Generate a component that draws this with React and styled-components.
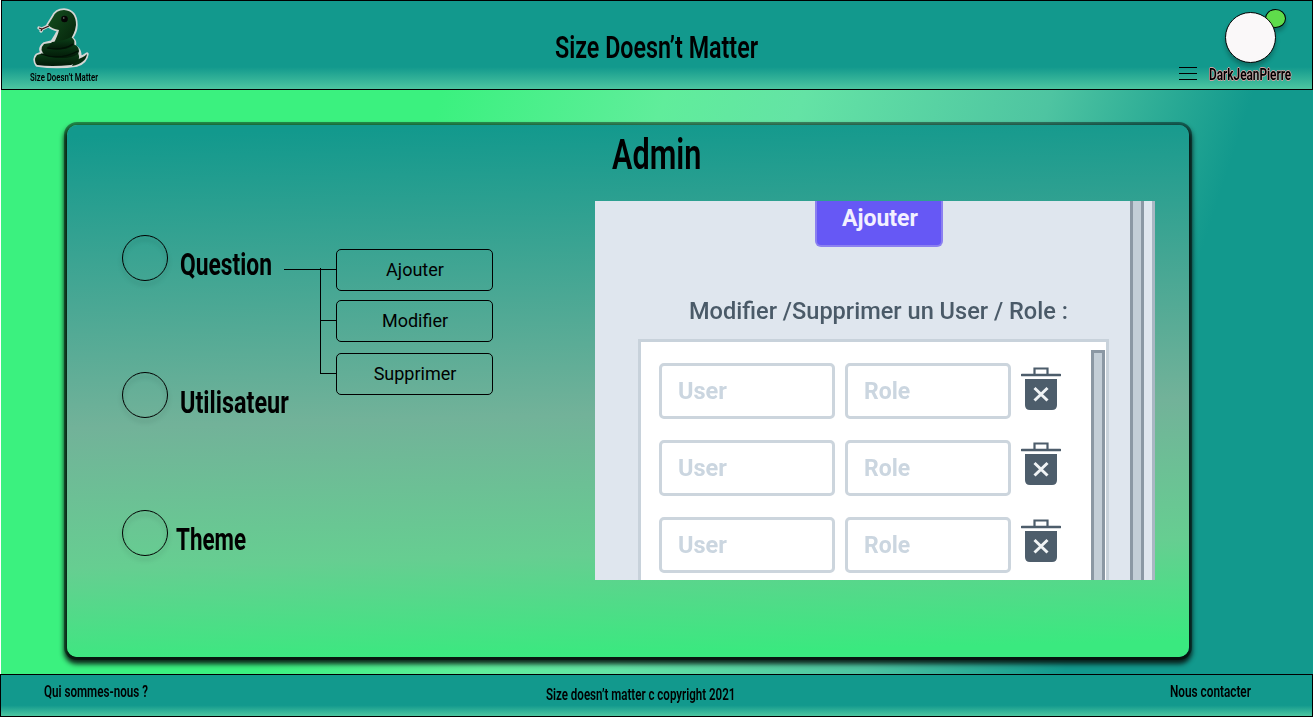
import React, { useLayoutEffect, useRef, useState } from "react";
import styled, { createGlobalStyle } from "styled-components";

const GlobalStyle = createGlobalStyle`
  *, *::before, *::after { box-sizing: border-box; }
  body { margin: 0; overflow: hidden; background: #fff; }
`;

const Page = styled.div`
  width: 1313px;
  height: 717px;
  display: flex;
  flex-direction: column;
  color: #000;
  font-family: Roboto, "Liberation Sans", sans-serif;
  background: linear-gradient(108deg, #3bf17f 30.5%, #60ed9b 45%, #64e3a5 54%, #4ec4a1 70%, #12998d 83%);
  border-left: 1px solid #fff;
`;

const FitBox = styled.span`
  display: block;
  width: ${(p) => p.$width}px;
  font-size: ${(p) => p.$size}px;
  line-height: 1.2;
  font-weight: ${(p) => p.$weight || 500};
  white-space: nowrap;
`;

const FitInner = styled.span`
  display: inline-block;
  transform-origin: 0 50%;
`;

/* Condensed lettering: the text is squeezed horizontally to a given width. */
function Condensed({ width, size, weight, children, className }) {
  const ref = useRef(null);
  const [scale, setScale] = useState(1);
  useLayoutEffect(() => {
    setScale(width / ref.current.offsetWidth);
  }, [width, children]);
  return (
    <FitBox $width={width} $size={size} $weight={weight} className={className}>
      <FitInner ref={ref} style={{ transform: `scaleX(${scale})` }}>{children}</FitInner>
    </FitBox>
  );
}

const Header = styled.header`
  height: 90px;
  flex: none;
  display: grid;
  grid-template-columns: 1fr auto 1fr;
  border: 1px solid #000;
  background: linear-gradient(#12998d 75%, #4dc6a0 100%);
`;

const Brand = styled.div`
  padding: 6px 0 0 28px;
  display: flex;
  flex-direction: column;
  svg { display: block; margin: 0 0 1px 3px; }
`;

const HeaderTitle = styled.h1`
  margin: 27px 2px 0 0;
`;

const Account = styled.div`
  display: flex;
  justify-content: flex-end;
  padding-right: 21px;
`;

const Burger = styled.div`
  width: 18px;
  height: 13px;
  margin: 66px 12px 0 0;
  border-top: 1px solid #000;
  border-bottom: 1px solid #000;
  display: flex;
  align-items: center;
  &::before { content: ""; width: 100%; height: 1px; background: #000; }
`;

const Profile = styled.div`
  display: flex;
  flex-direction: column;
  align-items: center;
  padding-top: 11px;
`;

const Avatar = styled.div`
  position: relative;
  width: 51px;
  height: 51px;
  border: 1px solid #000;
  border-radius: 50%;
  background: #faf8f9;
  box-shadow: 0 4px 4px rgba(0, 0, 0, 0.25);
`;

const Status = styled.span`
  position: absolute;
  z-index: -1;
  top: -3px;
  right: -10px;
  width: 21px;
  height: 19px;
  border: 1px solid #000;
  border-radius: 50%;
  background: #5fdc4b;
  box-shadow: 0 4px 4px rgba(0, 0, 0, 0.25);
`;

const AvatarWrap = styled.div`
  position: relative;
  z-index: 0;
`;

const UserName = styled(Condensed)`
  margin-top: 2px;
  text-shadow: 1px 0 #c9a3a3, -1px 0 #c9a3a3, 0 1px #c9a3a3, 0 -1px #c9a3a3;
`;

const Main = styled.main`
  flex: 1;
  padding: 35px 124px 17px 66px;
`;

const Panel = styled.section`
  height: 532px;
  border-radius: 10px;
  background: linear-gradient(178.5deg, #12998d 2%, #72b299 54%, #66ce91 79%, #3ae97f 97%);
  box-shadow: 0 0 0 3px rgba(0, 0, 0, 0.4), 0 4px 5px 3px rgba(8, 20, 16, 0.92);
  display: flex;
  flex-direction: column;
`;

const PanelTitle = styled.h2`
  margin: 4px 0 0 545px;
  height: 72px;
`;

const Columns = styled.div`
  display: flex;
  padding-left: 55px;
`;

const Menu = styled.nav`
  width: 473px;
  flex: none;
  padding-top: 34px;
  display: flex;
  flex-direction: column;
  gap: 91px;
`;

const MenuItem = styled.div`
  height: ${(p) => p.$height || 46}px;
  display: flex;
  gap: ${(p) => p.$gap || 12}px;
`;

const Dot = styled.span`
  flex: none;
  width: 46px;
  height: 46px;
  border: 1px solid #000;
  border-radius: 50%;
  filter: drop-shadow(0 4px 2px rgba(0, 0, 0, 0.25));
`;

const MenuLabel = styled(Condensed)`
  margin-top: ${(p) => p.$top || 10}px;
`;

const Branch = styled.div`
  display: flex;
  margin-top: 14px;
`;

const Trunk = styled.span`
  width: 36px;
  height: 21px;
  border-bottom: 1px solid #000;
`;

const Actions = styled.div`
  display: flex;
  flex-direction: column;
  height: 146px;
`;

const ActionRow = styled.div`
  display: flex;
  height: ${(p) => p.$height}px;
  &::before {
    content: "";
    width: 16px;
    height: ${(p) => (p.$last ? 21 : p.$height)}px;
    border-left: 1px solid #000;
    border-bottom: ${(p) => (p.$last ? "1px solid #000" : "none")};
    margin-top: ${(p) => (p.$first ? 19 : 0)}px;
    background: ${(p) => (p.$last ? "none" : "linear-gradient(#000, #000) 0 " + (p.$first ? 1 : 20) + "px / 100% 1px no-repeat")};
  }
`;

const Action = styled.button`
  width: 157px;
  height: 42px;
  padding: 0 0 2px 1px;
  border: 1px solid #000;
  border-radius: 5px;
  background: none;
  font: 400 18px Roboto, sans-serif;
  color: #000;
`;

const Preview = styled.div`
  width: 560px;
  height: 379px;
  flex: none;
  overflow: hidden;
  display: flex;
  background: #dfe6ee;
  color: #4a5a68;
  font-family: Roboto, sans-serif;
`;

const PreviewBody = styled.div`
  width: 535px;
  flex: none;
  display: flex;
  flex-direction: column;
`;

const AddButton = styled.div`
  width: 128px;
  height: 46px;
  margin-left: 220px;
  padding: 4px 0 0 25px;
  border: 2px solid #8b80f0;
  border-top: 0;
  border-radius: 0 0 6px 6px;
  background: #6658f5;
  color: #f2f0ff;
`;

const PreviewTitle = styled(Condensed)`
  margin: 51px 0 13px 94px;
`;

const List = styled.div`
  width: 471px;
  height: 241px;
  flex: none;
  margin-left: 43px;
  border: 3px solid #c8d2db;
  border-bottom: 0;
  background: #fff;
  display: flex;
`;

const Rows = styled.div`
  width: 450px;
  padding: 21px 0 0 18px;
  display: flex;
  flex-direction: column;
  gap: 21px;
`;

const Row = styled.div`
  display: flex;
  flex: none;
  height: 56.2px;
  svg { display: block; margin: 1px 0 0 10px; }
  &:first-child svg { margin-top: 3px; }
`;

const Field = styled.div`
  width: ${(p) => p.$width}px;
  margin-right: ${(p) => p.$after || 0}px;
  padding: 11px 0 0 16px;
  border: 3px solid #ccd5dd;
  border-radius: 5px;
  color: #cbd6e0;
`;

const Scrollbar = styled.div`
  width: 14px;
  margin-top: 8px;
  border: 3px solid #8b98a4;
  border-bottom: 0;
  background: #c3ced7;
`;

const Rail = styled.div`
  width: 14px;
  border: solid #8b98a4;
  border-width: 0 3px;
  background: #c3ced7;
`;

const RailEdge = styled.div`
  width: 11px;
  border-right: 3px solid #a9b7c3;
`;

const Footer = styled.footer`
  height: 43px;
  width: 1313px;
  margin-left: -1px;
  flex: none;
  display: grid;
  grid-template-columns: 502px 1fr auto;
  align-items: start;
  padding: 7px 61px 0 43px;
  border: 1px solid #000;
  background: linear-gradient(#12998d 74%, #4dc6a0 100%);
`;

const Copyright = styled(Condensed)`
  margin-top: 3px;
`;

function Snake() {
  return (
    <svg width="57" height="63" viewBox="0 0 57 63">
      <defs>
        <linearGradient id="coil" x1="0" y1="0" x2="0" y2="1">
          <stop offset="0" stopColor="#0c4219" />
          <stop offset="1" stopColor="#021807" />
        </linearGradient>
        <linearGradient id="head" x1="0" y1="0" x2="1" y2="1">
          <stop offset="0" stopColor="#14501f" />
          <stop offset="1" stopColor="#042009" />
        </linearGradient>
      </defs>
      <g stroke="#d3d6d4" strokeWidth="3.4" strokeLinejoin="round" strokeLinecap="round" fill="#d3d6d4">
        <path d="M15 18 L20 10 Q23 3 31 3 Q43 4 43 18 Q43 25 38 31 Q43 34 41 39 Q49 44 46 51 Q50 50 54 47 Q53 55 44 58 Q24 61 4 58 Q0 52 4 48 L9 46 Q6 41 11 37 L19 35 Q23 29 26 23 Q19 22 15 18Z" />
        <path d="M15 19 L9 22 L6 21 M9 22 L8 24" fill="none" />
      </g>
      <path d="M16 19 L9 22 L6 21 M9 22 L8 24" stroke="#3c1414" strokeWidth="1.3" fill="none" />
      <path d="M15 18 L20 10 Q23 3 31 3 Q43 4 43 18 Q42 27 35 36 L20 38 Q25 28 26 23 Q19 22 15 18Z" fill="url(#head)" />
      <path d="M42 53 Q50 51 54 47 Q53 56 39 59Z" fill="#052b0e" />
      <path d="M4 48 Q14 44 45 46 Q49 54 38 58 Q18 60 4 58 Q0 53 4 48Z" fill="url(#coil)" />
      <path d="M11 37 Q24 34 39 36 Q49 41 45 47 Q35 54 13 49 Q5 43 11 37Z" fill="url(#coil)" />
      <path d="M19 35 Q32 34 38 30 Q44 34 40 39 Q30 45 14 41 Q17 38 19 35Z" fill="url(#coil)" />
      <path d="M8 47 Q27 54 45 44 M14 41 Q30 44 40 37" stroke="#021106" strokeWidth="1.2" fill="none" />
      <circle cx="31.5" cy="12" r="3.3" fill="#050505" />
      <circle cx="30.8" cy="11" r=".7" fill="#8a9a8c" />
    </svg>
  );
}

function Trash() {
  return (
    <svg width="40" height="46" viewBox="0 0 40 46">
      <path d="M13.5 9V2.5H26.5V9" fill="none" stroke="#4d5d6b" strokeWidth="2.2" />
      <path d="M1 9H39" stroke="#4d5d6b" strokeWidth="2.6" strokeLinecap="round" />
      <path d="M4 13H36V39Q36 44 31 44H9Q4 44 4 39Z" fill="#4d5d6b" />
      <path d="M13.5 22L26.5 34.5M26.5 22L13.5 34.5" stroke="#f0f3f5" strokeWidth="3" />
    </svg>
  );
}

export default function App() {
  return (
    <>
      <GlobalStyle />
      <Page>
        <Header>
          <Brand>
            <Snake />
            <Condensed width={68} size={11} weight={600}>Size Doesn’t Matter</Condensed>
          </Brand>
          <HeaderTitle>
            <Condensed width={203} size={32} weight={600}>Size Doesn’t Matter</Condensed>
          </HeaderTitle>
          <Account>
            <Burger />
            <Profile>
              <AvatarWrap>
                <Status />
                <Avatar />
              </AvatarWrap>
              <UserName width={82} size={16} weight={600}>DarkJeanPierre</UserName>
            </Profile>
          </Account>
        </Header>
        <Main>
          <Panel>
            <PanelTitle>
              <Condensed width={89} size={43} weight={600}>Admin</Condensed>
            </PanelTitle>
            <Columns>
              <Menu>
                <MenuItem>
                  <Dot />
                  <MenuLabel width={92} size={32} weight={700}>Question</MenuLabel>
                  <Branch>
                    <Trunk />
                    <Actions>
                      <ActionRow $height={51} $first><Action>Ajouter</Action></ActionRow>
                      <ActionRow $height={53}><Action>Modifier</Action></ActionRow>
                      <ActionRow $height={42} $last><Action>Supprimer</Action></ActionRow>
                    </Actions>
                  </Branch>
                </MenuItem>
                <MenuItem $height={47}>
                  <Dot />
                  <MenuLabel $top={11} width={109} size={32} weight={700}>Utilisateur</MenuLabel>
                </MenuItem>
                <MenuItem $gap={8}>
                  <Dot />
                  <MenuLabel width={70} size={32} weight={700}>Theme</MenuLabel>
                </MenuItem>
              </Menu>
              <Preview>
                <PreviewBody>
                  <AddButton><Condensed width={76} size={23} weight={700}>Ajouter</Condensed></AddButton>
                  <PreviewTitle width={379} size={23}>Modifier /Supprimer un User / Role :</PreviewTitle>
                  <List>
                    <Rows>
                      {[0, 1, 2].map((n) => (
                        <Row key={n}>
                          <Field $width={176} $after={10}><Condensed width={49} size={24} weight={700}>User</Condensed></Field>
                          <Field $width={166}><Condensed width={46} size={24} weight={700}>Role</Condensed></Field>
                          <Trash />
                        </Row>
                      ))}
                    </Rows>
                    <Scrollbar />
                  </List>
                </PreviewBody>
                <Rail />
                <RailEdge />
              </Preview>
            </Columns>
          </Panel>
        </Main>
        <Footer>
          <Condensed width={104} size={16} weight={600}>Qui sommes-nous ?</Condensed>
          <Copyright width={189} size={16} weight={600}>Size doesn’t matter c copyright 2021</Copyright>
          <Condensed width={81} size={16} weight={600}>Nous contacter</Condensed>
        </Footer>
      </Page>
    </>
  );
}
